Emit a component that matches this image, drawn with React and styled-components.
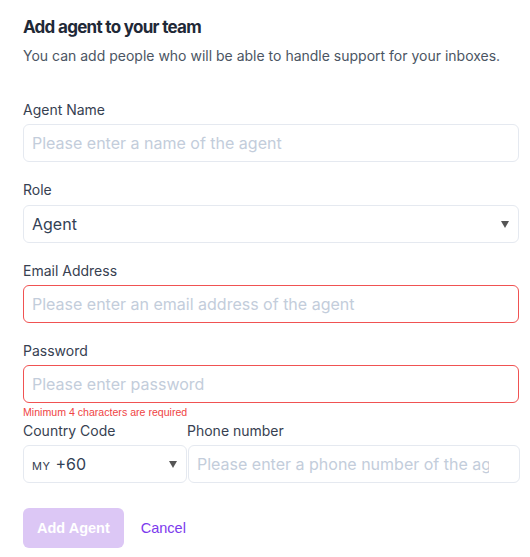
import React, { useState } from "react";
import styled, { createGlobalStyle } from "styled-components";

const GlobalStyle = createGlobalStyle`
  body {
    margin: 0;
    background: #ffffff;
    font-family: Inter, "Noto Sans", sans-serif;
  }
  * {
    box-sizing: border-box;
  }
`;

const App = () => {
  const [name, setName] = useState("");
  const [email, setEmail] = useState("");
  const [password, setPassword] = useState("");
  const [phone, setPhone] = useState("");

  return (
    <Wrapper>
      <GlobalStyle />
      <Title>Add agent to your team</Title>
      <Subtitle>
        You can add people who will be able to handle support for your inboxes.
      </Subtitle>
      <Form onSubmit={(e) => e.preventDefault()}>
        <Field>
          <Label>Agent Name</Label>
          <Input
            placeholder="Please enter a name of the agent"
            value={name}
            onChange={(e) => setName(e.target.value)}
          />
        </Field>
        <Field>
          <Label $gap={5}>Role</Label>
          <SelectBox>
            <SelectValue>Agent</SelectValue>
            <Arrow />
          </SelectBox>
        </Field>
        <Field>
          <Label>Email Address</Label>
          <Input
            $error
            placeholder="Please enter an email address of the agent"
            value={email}
            onChange={(e) => setEmail(e.target.value)}
          />
        </Field>
        <Field $hasError>
          <Label>Password</Label>
          <Input
            $error
            type="password"
            placeholder="Please enter password"
            value={password}
            onChange={(e) => setPassword(e.target.value)}
          />
          <ErrorText>Minimum 4 characters are required</ErrorText>
        </Field>
        <PhoneRow>
          <div>
            <Label>Country Code</Label>
            <SelectBox>
              <SelectValue>
                <Country>MY</Country>+60
              </SelectValue>
              <Arrow />
            </SelectBox>
          </div>
          <div>
            <Label>Phone number</Label>
            <Input
              $phone
              placeholder="Please enter a phone number of the agent"
              value={phone}
              onChange={(e) => setPhone(e.target.value)}
            />
          </div>
        </PhoneRow>
        <Actions>
          <SubmitButton type="submit" disabled>
            Add Agent
          </SubmitButton>
          <CancelLink href="#">Cancel</CancelLink>
        </Actions>
      </Form>
    </Wrapper>
  );
};

const Wrapper = styled.div`
  width: 530px;
  padding: 15px 11px 0 23px;
`;

const Title = styled.h2`
  margin: 0 0 7px;
  font-size: 17px;
  line-height: 24px;
  font-weight: 700;
  letter-spacing: -0.7px;
  color: #1f2937;
`;

const Subtitle = styled.p`
  margin: 0 0 34px;
  font-size: 14px;
  line-height: 20px;
  color: #4b5563;
`;

const Form = styled.form`
  display: flex;
  flex-direction: column;
`;

const Field = styled.div`
  display: flex;
  flex-direction: column;
  margin-bottom: ${(p) => (p.$hasError ? 0 : 18)}px;
`;

const Label = styled.label`
  display: block;
  font-size: 14px;
  line-height: 20px;
  color: #374151;
  margin-bottom: ${(p) => p.$gap ?? 4}px;
`;

const Input = styled.input`
  width: 100%;
  height: 38px;
  padding: 0 ${(p) => (p.$phone ? "30px" : "8px")} 0 8px;
  border: 1px solid ${(p) => (p.$error ? "#f05252" : "#e5e9f0")};
  border-radius: 6px;
  font-family: Inter, "Noto Sans", sans-serif;
  font-size: 16px;
  color: #1f2937;
  outline: none;
  background: #fff;
  margin-left: ${(p) => (p.$phone ? "1px" : "0")};

  &::placeholder {
    color: #c3cddb;
  }
`;

const ErrorText = styled.span`
  font-family: "Liberation Sans", Arial, sans-serif;
  font-size: 10.6px;
  line-height: 18px;
  color: #ef4444;
`;

const SelectBox = styled.div`
  display: flex;
  align-items: center;
  justify-content: space-between;
  height: 38px;
  padding: 0 9px 0 8px;
  border: 1px solid #e5e9f0;
  border-radius: 6px;
  background: #fff;
  cursor: pointer;
`;

const SelectValue = styled.span`
  font-size: 16px;
  color: #334155;
  display: flex;
  align-items: baseline;
`;

const Country = styled.span`
  font-size: 11px;
  letter-spacing: 0.5px;
  margin-right: 5px;
  color: #374151;
`;

const Arrow = styled.span`
  width: 0;
  height: 0;
  border-left: 4px solid transparent;
  border-right: 4px solid transparent;
  border-top: 7px solid #555;
`;

const PhoneRow = styled.div`
  display: grid;
  grid-template-columns: 164px 1fr;
  margin-bottom: 25px;
`;

const Actions = styled.div`
  display: flex;
  align-items: center;
  gap: 17px;
`;

const SubmitButton = styled.button`
  height: 40px;
  padding: 0 14px;
  border: none;
  border-radius: 6px;
  background: #dcc7f5;
  color: #fff;
  font-family: "Liberation Sans", Arial, sans-serif;
  font-weight: 700;
  font-size: 14.5px;
`;

const CancelLink = styled.a`
  font-family: "Liberation Sans", Arial, sans-serif;
  font-size: 14.5px;
  color: #7c3aed;
  text-decoration: none;
`;

export default App;
